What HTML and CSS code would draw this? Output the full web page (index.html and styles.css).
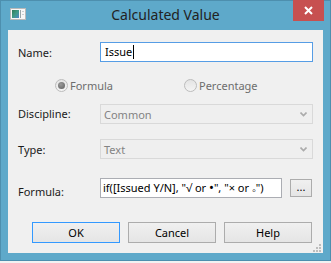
FILE: index.html
```html
<!DOCTYPE html>
<html lang="en">
<head>
    <meta charset="UTF-8">
    <title>Calculated Value</title>
    <link rel="stylesheet" href="styles.css">
</head>
<body>
    <div class="window">
        <div class="titlebar">
            <div class="app-icon">
                <svg width="16" height="12" viewBox="0 0 16 12">
                    <defs>
                        <linearGradient id="pic" x1="0" y1="0" x2="1" y2="1">
                            <stop offset="0" stop-color="#2f7a5a"/>
                            <stop offset="0.5" stop-color="#3f9a86"/>
                            <stop offset="1" stop-color="#4f86c8"/>
                        </linearGradient>
                    </defs>
                    <rect x="0.5" y="0.5" width="15" height="11" fill="#f7f7f7" stroke="#b9b9b9"/>
                    <rect x="2" y="2" width="7" height="8" fill="url(#pic)"/>
                    <rect x="10" y="2" width="1" height="8" fill="#9aa7a9"/>
                    <rect x="12" y="3" width="2" height="1" fill="#c7cfd1"/>
                    <rect x="12" y="6" width="2" height="1" fill="#c7cfd1"/>
                </svg>
            </div>
            <div class="title">Calculated Value</div>
            <div class="close">
                <svg width="9" height="9" viewBox="0 0 9 9">
                    <path d="M1 1 L8 8 M8 1 L1 8" stroke="#fff" stroke-width="2"/>
                </svg>
            </div>
        </div>

        <div class="client">
            <div class="field-row">
                <div class="label label-name">Name:</div>
                <div class="textbox focused"><span>Issue</span><span class="caret"></span></div>
            </div>

            <div class="radio-row">
                <div class="option">
                    <span class="radio checked"><span class="dot"></span></span>
                    <span class="radio-label">Formula</span>
                </div>
                <div class="option">
                    <span class="radio"></span>
                    <span class="radio-label">Percentage</span>
                </div>
            </div>

            <div class="field-row row-discipline">
                <div class="label">Discipline:</div>
                <div class="combo">
                    <span>Common</span>
                    <svg class="chevron" width="7" height="5" viewBox="0 0 7 5">
                        <path d="M0.5 0.5 L3.5 3.5 L6.5 0.5" fill="none" stroke="#ababab" stroke-width="1.6"/>
                    </svg>
                </div>
            </div>

            <div class="field-row row-type">
                <div class="label label-type">Type:</div>
                <div class="combo">
                    <span>Text</span>
                    <svg class="chevron" width="7" height="5" viewBox="0 0 7 5">
                        <path d="M0.5 0.5 L3.5 3.5 L6.5 0.5" fill="none" stroke="#ababab" stroke-width="1.6"/>
                    </svg>
                </div>
            </div>

            <div class="field-row row-formula">
                <div class="label label-formula">Formula:</div>
                <div class="textbox formula"><span>if([Issued Y/N], "√ or <span class="big">•</span>", "× or <span class="low">◦</span>")</span></div>
                <div class="btn btn-small">...</div>
            </div>

            <div class="buttons">
                <div class="btn btn-default">OK</div>
                <div class="btn">Cancel</div>
                <div class="btn">Help</div>
            </div>

            <div class="grip">
                <svg width="8" height="8" viewBox="0 0 8 8">
                    <rect x="6" y="0" width="2" height="2" fill="#bdbdbd"/>
                    <rect x="3" y="3" width="2" height="2" fill="#bdbdbd"/>
                    <rect x="6" y="3" width="2" height="2" fill="#bdbdbd"/>
                    <rect x="0" y="6" width="2" height="2" fill="#bdbdbd"/>
                    <rect x="3" y="6" width="2" height="2" fill="#bdbdbd"/>
                    <rect x="6" y="6" width="2" height="2" fill="#bdbdbd"/>
                </svg>
            </div>
        </div>
    </div>
</body>
</html>
```

FILE: styles.css
```css
* {
    box-sizing: border-box;
}
body {
    margin: 0;
    background: #f2f2f2;
    font-family: "Noto Sans", "Open Sans", sans-serif;
    font-size: 11px;
    color: #1a1a1a;
}
.window {
    width: 331px;
    height: 261px;
    background: #5ea9ca;
    border: 1px solid #4d8fae;
    padding: 0 7px 7px 7px;
    display: flex;
    flex-direction: column;
}
.titlebar {
    height: 29px;
    display: grid;
    grid-template-columns: 1fr auto 1fr;
    align-items: start;
}
.app-icon {
    width: 16px;
    height: 12px;
    margin: 7px 0 0 2px;
}
.app-icon svg {
    display: block;
}
.title {
    font-size: 14px;
    line-height: 28px;
    color: #222;
}
.close {
    justify-self: end;
    width: 31px;
    height: 21px;
    margin: -1px -1px 0 0;
    background: #c75050;
    display: flex;
    align-items: center;
    justify-content: center;
}
.client {
    position: relative;
    flex: 1;
    background: #f0f0f0;
    padding: 12px 10px 0 10px;
}
.field-row {
    display: flex;
    height: 20px;
}
.label {
    width: 82px;
    line-height: 20px;
}
.label-name {
    padding-top: 1px;
}
.label-type {
    padding-top: 1px;
}
.label-formula {
    padding-top: 4px;
}
.textbox {
    width: 213px;
    height: 20px;
    border: 1px solid #abadb3;
    background: #fff;
    padding: 0 4px;
    line-height: 18px;
    color: #000;
    white-space: nowrap;
    display: flex;
    align-items: center;
}
.textbox.focused {
    border-color: #569de5;
}
.caret {
    width: 1px;
    height: 14px;
    margin-left: 1px;
    background: #000;
}
.radio-row {
    display: flex;
    height: 13px;
    margin-top: 17px;
    padding-left: 37px;
}
.option {
    width: 129px;
    display: flex;
    align-items: center;
}
.radio {
    width: 13px;
    height: 13px;
    border: 1px solid #bcbcbc;
    border-radius: 50%;
    background: linear-gradient(#e4e4e4, #f4f4f4);
    display: flex;
    align-items: center;
    justify-content: center;
}
.dot {
    width: 7px;
    height: 7px;
    border-radius: 50%;
    background: radial-gradient(circle at 40% 35%, #9a9a9a, #5e5e5e);
}
.radio-label {
    margin-left: 2px;
    color: #6d6d6d;
    line-height: 13px;
}
.row-discipline {
    margin-top: 12px;
}
.row-type {
    margin-top: 15px;
}
.combo {
    width: 213px;
    height: 20px;
    border: 1px solid #d9d9d9;
    background: #efefef;
    color: #838383;
    padding: 0 5px 0 3px;
    display: flex;
    align-items: center;
    justify-content: space-between;
}
.row-formula {
    margin-top: 19px;
}
.textbox.formula {
    width: 182px;
    padding: 0 2px;
}
.big {
    font-size: 13px;
    line-height: 11px;
}
.low {
    position: relative;
    top: 2px;
    font-size: 11px;
    line-height: 11px;
}
.btn {
    width: 88px;
    height: 21px;
    border: 1px solid #acacac;
    background: linear-gradient(#f0f0f0, #e5e5e5);
    color: #000;
    display: flex;
    align-items: center;
    justify-content: center;
}
.btn-default {
    border-color: #3399ff;
}
.btn-small {
    width: 22px;
    height: 18px;
    margin: 1px 0 0 8px;
    padding-bottom: 3px;
}
.buttons {
    display: flex;
    gap: 8px;
    margin-top: 24px;
    padding-left: 14px;
}
.grip {
    position: absolute;
    right: 2px;
    bottom: 1px;
    width: 8px;
    height: 8px;
}
.grip svg {
    display: block;
}
```
